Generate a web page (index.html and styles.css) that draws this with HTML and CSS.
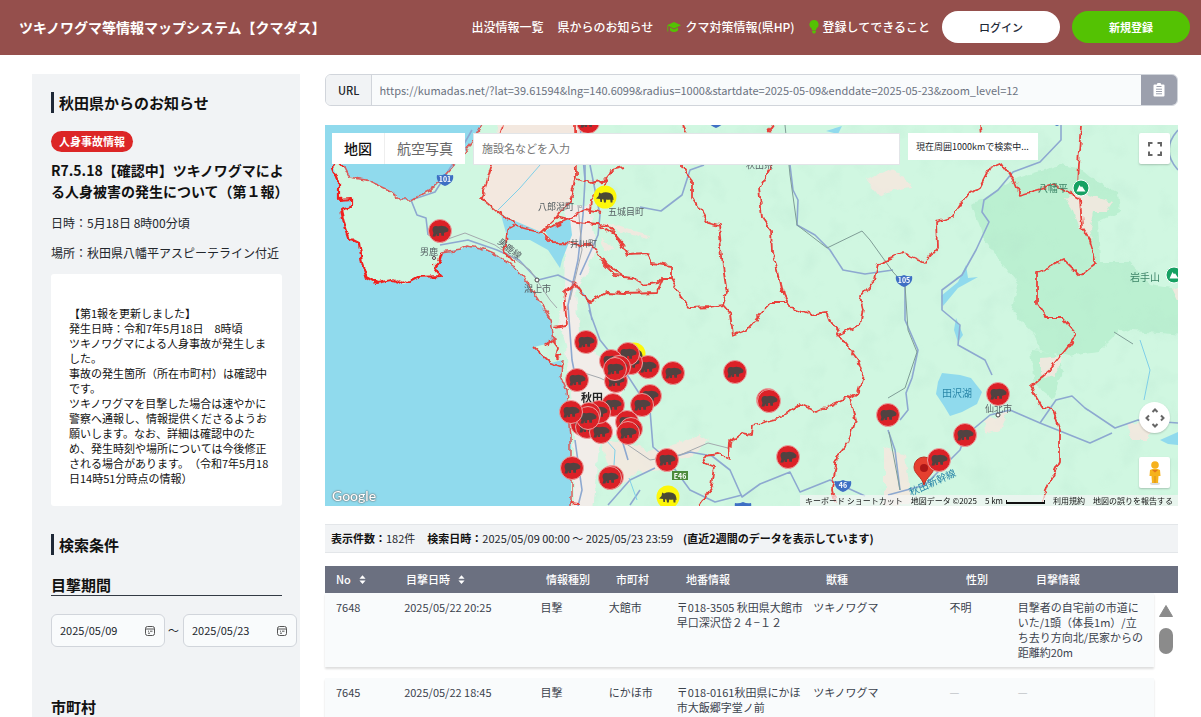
FILE: index.html
```html
<!DOCTYPE html>
<html lang="ja">
<head>
<meta charset="utf-8">
<title>ツキノワグマ等情報マップシステム【クマダス】</title>
<link rel="stylesheet" href="styles.css">
</head>
<body>
<header class="header">
  <h1 class="brand">ツキノワグマ等情報マップシステム【クマダス】</h1>
  <nav class="nav">
    <a href="#list">出没情報一覧</a>
    <a href="#news">県からのお知らせ</a>
    <a href="#measures"><svg class="nav-icon" viewBox="0 0 14 12" aria-hidden="true"><path d="M7 1 14 4.200 7 7.400 0 4.200ZM3 6.600 7 8.500l4-1.900V9.500Q7 12.500 3 9.500ZM1.200 5v5.500H.4V5Z"/></svg>クマ対策情報(県HP)</a>
    <a href="#register"><svg class="nav-icon bulb" viewBox="0 0 10 14" aria-hidden="true"><path d="M5 0a4.500 4.500 0 0 1 2.600 8.200L7 10H3L2.400 8.200A4.500 4.500 0 0 1 5 0ZM3.200 10.600h3.600v1.600L5.800 13.600H4.200L3.200 12.200Z"/></svg>登録してできること</a>
  </nav>
  <div class="account">
    <button class="pill" type="button">ログイン</button>
    <button class="pill pill-green" type="button">新規登録</button>
  </div>
</header>

<div class="layout">
  <aside class="sidebar">
    <section id="news">
      <h2 class="bar-title">秋田県からのお知らせ</h2>
      <span class="badge">人身事故情報</span>
      <h3 class="news-title">R7.5.18【確認中】ツキノワグマによ<br>る人身被害の発生について（第１報）</h3>
      <p class="news-meta">日時：5月18日 8時00分頃</p>
      <p class="news-meta">場所：秋田県八幡平アスピーテライン付近</p>
      <div class="memo">【第1報を更新しました】<br>発生日時：令和7年5月18日　8時頃<br>ツキノワグマによる人身事故が発生しま<br>した。<br>事故の発生箇所（所在市町村）は確認中<br>です。<br>ツキノワグマを目撃した場合は速やかに<br>警察へ通報し、情報提供くださるようお<br>願いします。なお、詳細は確認中のた<br>め、発生時刻や場所については今後修正<br>される場合があります。（令和7年5月18<br>日14時51分時点の情報）</div>
    </section>
    <section class="search">
      <h2 class="bar-title">検索条件</h2>
      <h3 class="field-title lined">目撃期間</h3>
      <div class="period">
        <label class="date"><input type="text" value="2025/05/09" aria-label="開始日"><svg viewBox="0 0 12 12" aria-hidden="true"><rect x="1.500" y="1.500" width="9" height="9" rx="2"/><path d="M1.500 4h9M4 6.200h1M6 6.200h2.500M4 8.200h2"/></svg></label>
        <span class="tilde">〜</span>
        <label class="date"><input type="text" value="2025/05/23" aria-label="終了日"><svg viewBox="0 0 12 12" aria-hidden="true"><rect x="1.500" y="1.500" width="9" height="9" rx="2"/><path d="M1.500 4h9M4 6.200h1M6 6.200h2.500M4 8.200h2"/></svg></label>
      </div>
      <h3 class="field-title city">市町村</h3>
    </section>
  </aside>

  <main class="main">
    <div class="url">
      <label class="url-label" for="url">URL</label>
      <input class="url-input" id="url" type="text" readonly value="https://kumadas.net/?lat=39.61594&amp;lng=140.6099&amp;radius=1000&amp;startdate=2025-05-09&amp;enddate=2025-05-23&amp;zoom_level=12">
      <button class="url-copy" type="button" aria-label="コピー"><svg viewBox="0 0 12 14" aria-hidden="true"><path fill="#fff" d="M1.500 1.500H4a2 2 0 0 1 4 0h2.500a1 1 0 0 1 1 1V12.500a1 1 0 0 1-1 1h-9a1 1 0 0 1-1-1V2.500a1 1 0 0 1 1-1Z"/><path stroke="#9ca0ad" d="M3.500 3.500h5M3 6.200h6M3 8.500h6M3 10.800h6"/></svg></button>
    </div>

    <div class="map">
      <svg class="map-art" viewBox="325 125 853 381" preserveAspectRatio="xMinYMin slice" role="img" aria-label="出没マップ">
        <defs>
          <filter id="rough" x="-5%" y="-5%" width="110%" height="110%" color-interpolation-filters="sRGB"><feTurbulence type="fractalNoise" baseFrequency=".12" numOctaves="2" seed="4"/><feDisplacementMap in="SourceGraphic" scale="7" xChannelSelector="R" yChannelSelector="G"/></filter>
          <filter id="relief" x="0" y="0" width="100%" height="100%"><feTurbulence type="fractalNoise" baseFrequency=".035" numOctaves="3" seed="9"/><feColorMatrix values="0 0 0 0 .45  0 0 0 0 .75  0 0 0 0 .6  1.600 0 0 0 -.78"/></filter>
          <g id="bear"><circle r="11.500" fill="#dc2127" stroke="#e9a19f"/><path fill="#514241" d="M-7.500-1C-7.500-4-6-5.300-3.500-5Q-1-4.500 1.500-5.200L5.500-4.600 8.500-2 8.200.5 5 1.500 4 2 4 4.800H1.400L1 2-.8 2 -1 5H-3.200L-3.600 2.800-4.600 5.600H-7.500L-6.600 2.200Z"/></g>
          <g id="boar"><circle r="11.500" fill="#fdf70a"/><path fill="#4b4935" d="M-9 1.500-6.500-1-5.800-4.500-4-3.400Q0-6 5-4 8-2.600 8.300.5L8.600 3 7.600 2.800 7.400 5.500H5.600L5.200 2.500Q3 3 1.200 2.400L.8 5.500H-1L-1.500 2.600-3 2.200-3 5H-4.600L-5 1.900Z"/></g>
          <path id="shield" d="M-8-5Q-4-4 0-6 4-4 8-5 9-1 6 2.500 3 5 0 6-3 5-6 2.500-9-1-8-5Z" fill="#3e6fc4"/>
          <g id="peak"><circle r="8" fill="#16a163" stroke="#fff"/><path d="M-4.500 3.500-1.500-3 0-.8 1-1.800 4.500 3.500Z" fill="#fff"/></g>
        </defs>
        <rect x="325" y="125" width="853" height="381" fill="#d0f7e1"/>
        <g filter="url(#rough)" fill="#bbf0d1">
          <path d="M972 205 1000 188 1018 178 1060 165 1078 168 1090 178 1118 192 1120 212 1098 222 1100 262 1130 262 1150 285 1185 290V335L1120 330 1098 352 1070 356 1040 350 1032 330 1012 312 1018 285 1000 262 985 240Z"/>
          <path d="M1031 350 1055 352 1062 372 1052 398 1035 385Z"/>
        </g>
        <rect x="540" y="125" width="638" height="381" filter="url(#relief)" opacity=".35"/>
        <g filter="url(#rough)" fill="#f3e8df">
          <path d="M498 122H580L575 180 568 205 543 232 516 224 482 198 491 165Z"/>
          <path d="M566 205H590L596 250 585 275 576 290 580 345 618 365 625 430 600 440 592 510H574V430L569 385 566 345 558 325 564 295Z" fill="#f1ede9"/>
          <path d="M600 440 640 445 665 470 635 472 628 485 610 470ZM680 443 700 434 708 440 694 456 650 465 638 455ZM866 180 885 170 905 176 910 187 888 192 878 196ZM1065 198 1080 192 1112 202 1105 212 1094 212 1090 230 1092 240 1080 228 1072 208ZM1040 358 1062 356 1055 378 1040 374ZM985 420 1008 412 1000 430 986 434ZM884 447 905 455 912 505H884ZM1128 424 1150 418 1150 440 1132 440ZM1172 288 1180 285V305ZM602 222 650 235 648 240 605 226ZM600 238 615 250 604 250Z" opacity=".9"/>
        </g>
        <path fill="#90daed" d="M325 125H482L472 142 457 163 434 188 421 195 411 200 401 200 389 190 367 180 349 177 344 167 337 160 333 167 339 183 339 200 351 199 351 207 341 210 344 223 349 238 359 243 362 263 367 278 376 283 392 280 404 284 417 277 441 276 434 267 439 262 442 252 461 249 467 246 481 248 497 255 514 267 524 278 537 298 551 320 554 342 534 347 551 363 562 360 561 377 567 390 571 437 571 506H325Z"/>
        <g fill="#90daed">
          <path d="M501 215 541 232 552 243 568 245 562 260 560 268 548 250 530 240 508 240ZM545 231 570 218 572 235 568 245 552 243Z"/>
          <path d="M942 373 960 375 971 378 982 392 977 404 962 412 950 416 944 406 936 394 938 382ZM966 265 968 278 978 277 958 288 943 306 941 296 958 282ZM956 318 963 335 958 342 954 330ZM1160 440 1178 432V445L1168 444ZM826 131 842 126 838 134Z"/>
        </g>
        <g fill="none" stroke="#8da8d0" stroke-width="1.600" stroke-linejoin="round">
          <path d="M472 130 452 165 435 192 411 200 417 215 426 218 428 235M440 245 468 240 497 250 519 260 538 280M538 280 558 275 574 283 588 300 592 320M580 125 585 180 583 215 578 260 568 305 572 360 577 385M590 165 600 215 598 235 580 275M704 165 690 170 682 195 661 211 640 207M589 310 600 340 624 370 650 410 653 447 667 459 690 452 712 456 730 470 742 497 760 484 790 472 800 492 830 480 865 496"/>
          <path d="M608 505 630 480 655 468M668 460 690 490 715 502 742 495M790 165 793 190 798 200 797 225 815 235 830 250 843 270 865 274 893 270M905 285 905 320 918 350 912 378 906 393 908 410 900 420M888 430 895 450 900 490M888 495 925 485 960 450 965 436 990 415 1010 410 1040 423 1056 400 1072 396 1085 408 1115 428 1138 420 1178 423M1061 125V140L1040 162 1013 172 998 190 984 200 982 212 989 222 976 250 962 275 942 290 942 310 960 325 958 345 985 360 992 375M630 505 640 490M1178 130Q1160 150 1178 170"/>
          <path d="M575 440 582 490 578 506M585 125V180M622 440 628 460"/>
          <path d="M1040 423 1090 443 1112 433"/>
        </g>
        <g fill="none" stroke="#a3a8ad">
          <path d="M428 235 445 240 465 233 495 245 530 270 550 300 557 308M578 205 582 250 570 300M575 370 600 378 625 390M625 443 650 460 680 455 708 443 728 448"/>
          <path stroke="#7f9c96" d="M785 125 790 175 797 225 827 248 862 231 870 240 893 272 905 285 908 330 917 352 905 388 888 398M889 432 900 490M1114 332 1133 344"/>
        </g>
        <g fill="none" stroke="#7fcfe8"><path d="M498 210 520 188 540 165M606 440 615 450 614 465M629 478 637 500M1140 340 1150 370 1144 400"/></g>
        <g fill="none" stroke="#e8403a" stroke-width="1.800" stroke-linejoin="round" filter="url(#rough)">
          <path d="M482 125 472 142 457 163 434 188 421 195 411 200 401 200 389 190 367 180 349 177 344 167 M442 252 461 249 467 246 481 248 497 255 514 267 524 278 537 298 551 320 554 342M562 360 561 377 567 390 571 437 571 506" stroke="#dc5a58" stroke-width="1.500"/>
          <path d="M344 167 337 160 333 167 339 183 339 200 351 199 351 207 341 210 344 223 349 238 359 243 362 263 367 278 376 283 392 280 404 284 417 277 441 276 434 267 439 262 442 252" stroke="#f0201e" stroke-width="2.200"/>
          <path d="M503 125 491 165 481 198 501 215 516 225 541 232 557 217 571 197 576 175 575 125M516 225 507 230 506 245 504 252 514 263M541 232 552 243 591 244 607 265 624 276M600 260 615 275 632 277 643 285 658 283 663 278 671 278M541 232 571 218 585 210 601 213M557 217 577 222 607 225 624 245M600 226 617 237 628 255 647 254 652 263 671 266V278L682 297 690 308 710 307 723 305M577 177 591 183 607 180 611 170 624 167M607 180 591 200 590 213"/>
          <path d="M683 125 687 133M682 160V167L692 180V198L708 223 719 226 723 267 727 293 723 305 730 313 733 335 747 330 755 320 757 317 770 303 788 303M773 125 768 132M772 165 759 188 762 217 771 230 772 253 778 270 783 293 790 307 810 315 827 312 830 320 839 335 858 360 863 375 858 392 850 397 817 412 800 404 780 418 753 425 752 435 742 433 730 442 729 458 718 454 703 456 705 463 715 467 712 487 700 505M850 397 855 420 848 443 837 457 832 490 835 502M839 335 860 325 863 310 860 297 875 280 878 263 903 253 925 262 938 247 937 222 953 217 965 197 980 187 990 168 1002 163 1013 178 1020 195 1055 185 1080 199 1082 228 1090 240 1097 263 1080 276 1063 260 1037 272V303L1047 318 1062 318 1077 335 1050 370 1030 387 1042 407 1052 408 1060 430V460L1047 487 1043 502M980 125 981 135M1081 125 1078 163 1077 187"/>
          <path d="M574 283 564 292 567 325 554 327M574 283 581 293 591 302 607 292 624 293 657 292 663 278M534 347 551 363 562 367M545 345 552 340 558 348 556 358 562 355M571 502 580 503"/>
        </g>
        <g class="place">
          <text x="538" y="210">八郎潟町 ◦</text><text x="608" y="215">五城目町</text><text x="570" y="247">井川町</text><text x="420" y="255">男鹿</text><text x="524" y="292">潟上市</text><text x="746" y="168">秋田県</text><text x="985" y="412">仙北市</text><text class="big" x="581" y="402">秋田</text>
          <text transform="translate(497 243) rotate(38)">男鹿線</text>
          <text class="water" x="942" y="397">田沢湖</text><text class="water" transform="translate(911 496) rotate(-24)">秋田新幹線</text>
          <text class="hill" x="1038" y="192">八幡平</text><text class="hill" x="1130" y="281">岩手山</text>
        </g>
        <g fill="#fff" stroke="#444"><circle cx="537" cy="280" r="2"/><circle cx="434" cy="258" r="1.500"/><circle cx="998" cy="415" r="2"/></g>
        <use href="#peak" x="1081" y="188"/><use href="#peak" x="1174" y="275"/>
        <use href="#shield" x="445" y="180"/><use href="#shield" x="904" y="281"/><use href="#shield" x="843" y="486"/><use href="#shield" x="743" y="508"/><use href="#shield" x="716" y="122"/><use href="#shield" x="1057" y="120"/>
        <g class="route"><text x="445" y="182">101</text><text x="904" y="283">105</text><text x="843" y="488">46</text><rect x="672" y="471" width="16" height="9" fill="#4c8b3c"/><text x="680" y="479">E46</text></g>
        <use href="#boar" x="605" y="197"/><use href="#boar" x="634" y="354"/><use href="#boar" x="668" y="497"/>
        <use href="#bear" x="588" y="122"/><use href="#bear" x="440" y="231"/><use href="#bear" x="586" y="342"/><use href="#bear" x="577" y="380"/><use href="#bear" x="572" y="468"/><use href="#bear" x="612" y="477"/><use href="#bear" x="610" y="478"/>
        <use href="#bear" x="616" y="381"/><use href="#bear" x="648" y="367"/><use href="#bear" x="631" y="363"/><use href="#bear" x="628" y="354"/><use href="#bear" x="611" y="361"/><use href="#bear" x="619" y="367"/><use href="#bear" x="615" y="369"/>
        <use href="#bear" x="673" y="373"/><use href="#bear" x="650" y="396"/><use href="#bear" x="642" y="405"/><use href="#bear" x="613" y="405"/>
        <use href="#bear" x="582" y="424"/><use href="#bear" x="587" y="427"/><use href="#bear" x="601" y="432"/><use href="#bear" x="599" y="412"/><use href="#bear" x="589" y="414"/><use href="#bear" x="588" y="418"/><use href="#bear" x="571" y="412"/>
        <use href="#bear" x="627" y="422"/><use href="#bear" x="631" y="429"/><use href="#bear" x="628" y="433"/><use href="#bear" x="667" y="460"/><use href="#bear" x="735" y="372"/><use href="#bear" x="768" y="400"/><use href="#bear" x="769" y="401"/><use href="#bear" x="788" y="457"/><use href="#bear" x="888" y="415"/><use href="#bear" x="998" y="394"/><use href="#bear" x="965" y="435"/>
        <path d="M924 485C922 477 914 474 914 467A10 10 0 0 1 934 467C934 474 926 477 924 485Z" fill="#e5402f" stroke="#bd3023"/><circle cx="924" cy="468" r="4" fill="#ad1717"/>
        <use href="#bear" x="939" y="460"/>
      </svg>
      <div class="map-top">
        <div class="map-type"><button class="active" type="button">地図</button><button type="button">航空写真</button></div>
        <input class="map-search" type="text" placeholder="施設名などを入力" aria-label="施設名などを入力">
        <div class="map-state">現在周囲1000kmで検索中...</div>
        <button class="map-btn full" type="button" aria-label="全画面"><svg viewBox="0 0 18 18" aria-hidden="true"><path d="M3 6.500V3H6.500M11.500 3H15V6.500M15 11.500V15H11.500M6.500 15H3V11.500"/></svg></button>
      </div>
      <div class="map-side">
        <button class="map-btn round" type="button" aria-label="カメラ"><svg viewBox="0 0 20 20" aria-hidden="true"><path d="M7.500 4 10 1.500 12.500 4M7.500 16 10 18.500 12.500 16M4 7.500 1.500 10 4 12.500M16 7.500 18.500 10 16 12.500"/></svg></button>
        <button class="map-btn" type="button" aria-label="ストリートビュー"><svg class="pegman" viewBox="0 0 16 26" aria-hidden="true"><ellipse cx="8" cy="23.500" rx="5" ry="1.500" fill="#ddd"/><path d="M3 10Q8 7.500 13 10L13.500 16H11.500L11 23H5L4.500 16H2.500Z" fill="#f6b21d"/><path d="M5 10 8 12.500 11 10Z" fill="#e2761b"/><path d="M8 16V23" stroke="#d9901a" stroke-width="1"/><circle cx="8" cy="5" r="3.800" fill="#f6b21d"/></svg></button>
      </div>
      <span class="google">Google</span>
      <div class="map-foot"><button type="button">キーボード ショートカット</button><span>地図データ ©2025</span><span class="scale">5 km<i></i></span><a href="#terms">利用規約</a><a href="#report">地図の誤りを報告する</a></div>
    </div>

    <div class="status"><b>表示件数：</b>182件<span class="status-range"><b>検索日時：</b>2025/05/09 00:00 〜 2025/05/23 23:59</span><b>(直近2週間のデータを表示しています)</b></div>

    <div class="table-wrap" id="list">
      <table class="table">
        <thead>
          <tr><th>No <svg viewBox="0 0 8 10" aria-hidden="true"><path d="M4 0 7.500 4H.5ZM4 10 .5 6h7Z"/></svg></th><th>目撃日時 <svg viewBox="0 0 8 10" aria-hidden="true"><path d="M4 0 7.500 4H.5ZM4 10 .5 6h7Z"/></svg></th><th>情報種別</th><th>市町村</th><th>地番情報</th><th>獣種</th><th>性別</th><th>目撃情報</th></tr>
        </thead>
        <tbody>
          <tr><td>7648</td><td>2025/05/22 20:25</td><td>目撃</td><td>大館市</td><td>〒018-3505 秋田県大館市<br>早口深沢岱２４−１２</td><td>ツキノワグマ</td><td>不明</td><td>目撃者の自宅前の市道に<br>いた/1頭（体長1m）/立<br>ち去り方向北/民家からの<br>距離約20m</td></tr>
          <tr><td>7645</td><td>2025/05/22 18:45</td><td>目撃</td><td>にかほ市</td><td>〒018-0161秋田県にかほ<br>市大飯郷字堂ノ前</td><td>ツキノワグマ</td><td class="none">—</td><td class="none">—</td></tr>
        </tbody>
      </table>
      <div class="scroll" aria-hidden="true"><svg viewBox="0 0 14 12"><path d="M7 .5 13.500 11.500H.5Z" fill="#8b8b8b" stroke="#8b8b8b" stroke-linejoin="round"/></svg><i></i></div>
    </div>
  </main>
</div>
</body>
</html>
```
FILE: styles.css
```css
* { box-sizing: border-box; }
html { height: 100%; overflow: hidden; }
body {
  margin: 0;
  height: 100%;
  display: flex;
  flex-direction: column;
  overflow: hidden;
  background: #fff;
  color: #22262c;
  font-family: "Noto Sans CJK JP", "Noto Sans", sans-serif;
  font-size: 11px;
  line-height: 15px;
  text-spacing-trim: space-all;
}
h1, h2, h3, p { margin: 0; }
button, input { font: inherit; color: inherit; border: 0; padding: 0; margin: 0; background: none; }
a { color: inherit; text-decoration: none; }

.header {
  flex: none;
  display: flex;
  align-items: center;
  padding: 11px 11px 12px 19px;
  background: #954f4c;
  color: #fff;
}
.brand { flex: 1; font-size: 14px; line-height: 20px; font-weight: 700; white-space: nowrap; }
.nav { display: flex; gap: 14px; font-size: 12px; line-height: 18px; font-weight: 500; white-space: nowrap; }
.nav a { display: flex; align-items: center; gap: 4px; }
.nav-icon { width: 14px; height: 12px; fill: #54c203; }
.nav-icon.bulb { width: 10px; height: 14px; }
.account { display: flex; gap: 12px; margin-left: 12px; }
.pill { width: 118px; height: 32px; border-radius: 16px; background: #fff; color: #1f2937; font-weight: 500; }
.pill-green { background: #54c203; color: #fff; font-weight: 700; }

.layout { flex: 1; min-height: 0; display: flex; align-items: flex-start; gap: 25px; padding: 19px 23px 0 32px; }
.sidebar { flex: none; width: 268px; padding: 18px 18px 60px 19px; background: #f1f3f5; }
.bar-title { border-left: 3px solid #1f2937; padding-left: 5px; font-size: 15px; line-height: 21px; font-weight: 700; color: #111; }
.badge { display: table; margin-top: 18px; padding: 3px 8px; border-radius: 11px; background: #dc2626; color: #fff; font-weight: 700; }
.news-title { margin-top: 8px; font-size: 14px; line-height: 21px; font-weight: 700; white-space: nowrap; color: #111; }
.news-meta { margin-top: 12px; font-size: 12px; line-height: 18px; white-space: nowrap; }
.memo { margin-top: 12px; padding: 32px 18px 20px; border-radius: 3px; background: #fff; white-space: nowrap; color: #111; }
.search { margin-top: 28px; }
.field-title { font-size: 15px; line-height: 21px; font-weight: 700; color: #111; }
.field-title.lined { margin-top: 19px; border-bottom: 1px solid #333a44; }
.field-title.city { margin-top: 49px; }
.period { display: flex; align-items: center; gap: 3px; margin-top: 18px; }
.date { flex: none; display: flex; align-items: center; justify-content: space-between; width: 114px; height: 33px; padding: 0 8px; border: 1px solid #d1d5db; border-radius: 6px; background: #f9fbfc; }
.date input { width: 70px; outline: 0; }
.date svg { width: 12px; height: 12px; fill: none; stroke: #555; }
.tilde { flex: none; width: 12px; }

.main { flex: 1; min-width: 0; }
.url { display: flex; height: 32px; border: 1px solid #d1d5db; border-radius: 6px; overflow: hidden; background: #f9fbfc; }
.url-label { padding: 8px 12px 0; background: #f1f3f5; border-right: 1px solid #d1d5db; font-weight: 500; line-height: 15px; }
.url-input { flex: 1; min-width: 0; padding: 0 7px; color: #6b7280; outline: 0; }
.url-copy { width: 36px; display: grid; place-items: center; background: #9ca0ad; }
.url-copy svg { width: 12px; height: 14px; }

.map { position: relative; margin-top: 19px; height: 381px; overflow: hidden; background: #90daed; }
.map-art { display: block; width: 100%; height: 100%; }
.place text { font-size: 9px; fill: #555f63; }
.place .big { font-size: 11px; font-weight: 700; fill: #222; }
.place .water { font-size: 10px; fill: #2a86a8; }
.place .hill { font-size: 10px; fill: #3c8467; }
.route text { font-size: 7px; font-weight: 700; fill: #fff; text-anchor: middle; }
.map-top { position: absolute; top: 8px; left: 7px; right: 8px; display: flex; align-items: flex-start; gap: 8px; }
.map-type { display: flex; background: #fff; font-size: 14px; color: #666; }
.map-type button { height: 31px; padding: 0 12px; }
.map-type .active { color: #111; font-weight: 500; border-right: 1px solid #eee; }
.map-search { flex: 1; min-width: 0; height: 32px; padding: 0 8px 2px; background: #fff; border: 1px solid #e2e5e8; }
.map-search::placeholder { color: #757575; opacity: 1; }
.map-state { width: 130px; padding: 6px 8px; background: #fff; font-size: 9px; white-space: nowrap; }
.map-btn { display: grid; place-items: center; width: 31px; height: 31px; border-radius: 2px; background: #fff; box-shadow: 0 1px 2px #0003; }
.map-btn svg { width: 20px; height: 20px; fill: none; stroke: #666; stroke-width: 2; }
.map-btn.full { margin-left: 93px; }
.map-btn.full svg { width: 18px; height: 18px; }
.map-btn.round { border-radius: 50%; }
.map-btn .pegman { width: 16px; height: 26px; stroke: none; }
.map-side { position: absolute; right: 8px; bottom: 18px; display: grid; gap: 24px; }
.google { position: absolute; left: 7px; bottom: 0; font: 500 14px/20px Lato, sans-serif; color: #fff; text-shadow: 0 0 1px #555, 0 0 2px #666; }
.map-foot { position: absolute; right: 0; bottom: 0; display: flex; gap: 8px; height: 11px; padding: 0 5px; font-size: 8px; line-height: 11px; background: #f5f5f5b0; color: #111; white-space: nowrap; }
.scale { display: flex; align-items: flex-end; gap: 3px; }
.scale i { width: 39px; height: 4px; margin-bottom: 2px; border: 1px solid #111; border-top: 0; border-bottom-width: 2px; }

.status { margin-top: 18px; padding: 6px; border: solid #e3e6e9; border-width: 1px 0; background: #f1f3f5; white-space: nowrap; }
.status b { color: #111; }
.status-range { margin: 0 10px 0 12px; }

.table-wrap { position: relative; margin-top: 13px; }
.table, .table thead, .table tbody { display: block; }
.table tr { display: grid; grid-template-columns: 1fr 2fr 1fr 1fr 2fr 2fr 1fr 2fr; padding-left: 11px; }
.table thead tr { padding: 6px 2px 6px 11px; background: #6b7080; color: #fff; }
.table th { padding: 0; text-align: left; font-weight: 500; }
.table th svg { width: 7px; height: 9px; margin-left: 6px; fill: #fff; }
.table td { padding: 7px 0; white-space: nowrap; color: #3b424c; }
.table .none { color: #c3c6ca; }
.table tbody tr { margin: 0 24px 11px 0; background: #f9fbfc; box-shadow: 0 2px 2px #0002; }
.scroll { position: absolute; top: 39px; right: 5px; display: grid; gap: 11px; }
.scroll svg { width: 14px; height: 12px; }
.scroll i { width: 14px; height: 26px; border-radius: 7px; background: #8b8b8b; }
```
